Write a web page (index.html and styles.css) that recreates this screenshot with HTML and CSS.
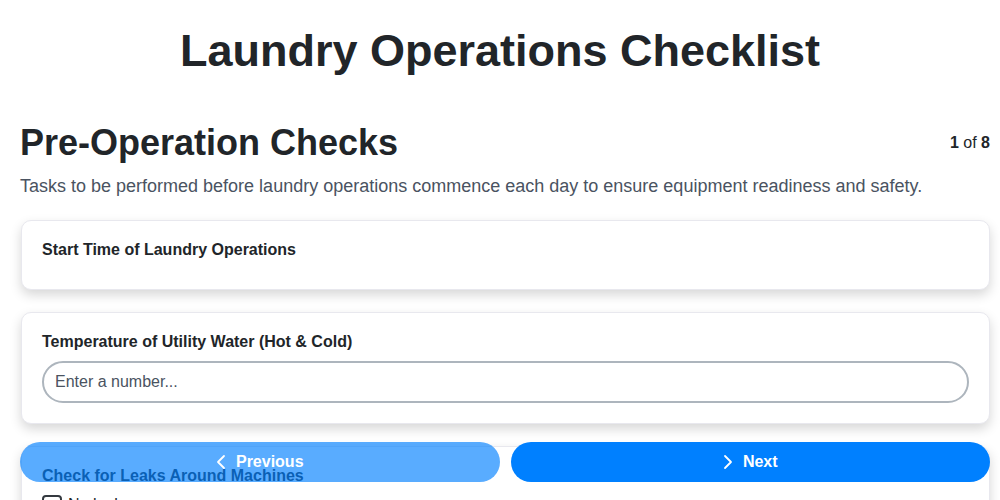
FILE: index.html
```html
<!DOCTYPE html>
<html lang="en">
<head>
  <meta charset="UTF-8" />
  <title>Laundry Operations Checklist</title>
  <link rel="stylesheet" href="styles.css">
</head>
<body>
  <h1 class="title">Laundry Operations Checklist</h1>

  <div class="page">
    <div class="section-head">
      <h2>Pre-Operation Checks</h2>
      <div class="counter"><b>1</b> of <b>8</b></div>
    </div>
    <p class="desc">Tasks to be performed before laundry operations commence each day to ensure equipment readiness and safety.</p>

    <!-- Questions -->
    <div class="card">
      <label class="q-label">Start Time of Laundry Operations</label>
    </div>

    <div class="card">
      <label class="q-label" for="waterTemp">Temperature of Utility Water (Hot &amp; Cold)</label>
      <input class="text-input" type="text" id="waterTemp" placeholder="Enter a number...">
    </div>

    <div class="card">
      <label class="q-label">Check for Leaks Around Machines</label>
      <label class="check-row"><input type="checkbox" class="check"> No leaks</label>
      <label class="check-row"><input type="checkbox" class="check"> Leak found</label>
    </div>
  </div>

  <!-- Nav buttons -->
  <div class="nav">
    <button class="nav-btn prev" disabled>
      <svg width="10" height="16" viewBox="0 0 10 16"><path d="M8 2 L2 8 L8 14" fill="none" stroke="#fff" stroke-width="1.8" stroke-linecap="round" stroke-linejoin="round"/></svg>
      Previous
    </button>
    <button class="nav-btn next">
      <svg width="10" height="16" viewBox="0 0 10 16"><path d="M2 2 L8 8 L2 14" fill="none" stroke="#fff" stroke-width="1.8" stroke-linecap="round" stroke-linejoin="round"/></svg>
      Next
    </button>
  </div>
</body>
</html>
```

FILE: styles.css
```css
body {
  margin: 0;
  background: #ffffff;
  color: #212529;
  font-family: "Liberation Sans", Arial, sans-serif;
}
.title {
  font-size: 45px;
  text-align: center;
  margin: 25px 0 0;
}
.page {
  padding: 0 10px 120px 20px;
}
.section-head {
  display: flex;
  justify-content: space-between;
  align-items: center;
  margin-top: 45px;
}
.section-head h2 {
  font-size: 36px;
  margin: 0;
}
.counter {
  font-size: 16px;
}
.desc {
  font-size: 18px;
  color: #4a5361;
  margin: 12px 0 23px;
}
.card {
  background: #fff;
  border: 1px solid #e8e8ee;
  border-radius: 10px;
  box-shadow: 0 5px 12px rgba(0, 0, 0, 0.16);
  padding: 20px;
  margin: 0 0 22px 1px;
}
.q-label {
  display: block;
  font-weight: bold;
  font-size: 16px;
  margin-bottom: 10px;
}
.text-input {
  box-sizing: border-box;
  width: 100%;
  padding: 10px 11px;
  font-size: 16px;
  font-family: inherit;
  border: 2px solid #adb5bd;
  border-radius: 21px;
  color: #212529;
  outline: none;
}
.text-input::placeholder {
  color: #4a5361;
}
.check-row {
  display: flex;
  align-items: center;
  gap: 6px;
  font-size: 16px;
  margin-bottom: 8px;
}
.check {
  appearance: none;
  width: 20px;
  height: 20px;
  margin: 0;
  border: 2px solid #343a40;
  border-radius: 4px;
}
.nav {
  position: fixed;
  left: 20px;
  right: 10px;
  bottom: 18px;
  display: flex;
  gap: 11px;
}
.nav-btn {
  flex: 1;
  height: 40px;
  border: none;
  border-radius: 20px;
  background: #0080ff;
  color: #fff;
  font-family: inherit;
  font-size: 16px;
  font-weight: bold;
  display: flex;
  align-items: center;
  justify-content: center;
  gap: 10px;
  cursor: pointer;
}
.nav-btn.prev {
  opacity: 0.65;
  cursor: default;
}
```
